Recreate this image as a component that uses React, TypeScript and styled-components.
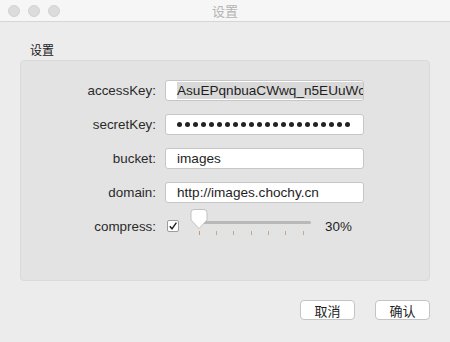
import styled, { createGlobalStyle } from 'styled-components'

const GlobalStyle = createGlobalStyle`
  html, body {
    margin: 0;
    padding: 0;
    background: #ececec;
  }
  body {
    font-family: "Liberation Sans", "Noto Sans CJK SC", sans-serif;
  }
`

const fields = [
  { label: 'accessKey:', value: 'AsuEPqnbuaCWwq_n5EUuWc', selected: true },
  { label: 'secretKey:', value: '', password: 22 },
  { label: 'bucket:', value: 'images' },
  { label: 'domain:', value: 'http://images.chochy.cn' },
]

const ticks = [198, 215, 232, 250, 267, 284, 302]

const Thumb = () => (
  <svg width="18" height="22" viewBox="0 0 18 22">
    <path
      d="M4 1.5 H14 A3 3 0 0 1 17 4.5 V12 L9 20.5 L1 12 V4.5 A3 3 0 0 1 4 1.5 Z"
      fill="#ffffff"
      stroke="#c2c2c2"
      strokeWidth="1"
    />
  </svg>
)

const App = () => {
  return (
    <Window>
      <GlobalStyle />
      <TitleBar>
        <Lights>
          <Light />
          <Light />
          <Light />
        </Lights>
        <WindowTitle>设置</WindowTitle>
      </TitleBar>
      <Body>
        <GroupLabel>设置</GroupLabel>
        <Panel>
          <Form>
            {fields.map((f) => (
              <Row key={f.label}>
                <Label>{f.label}</Label>
                <Field>
                  {f.password ? (
                    <Dots>
                      {Array.from({ length: f.password }).map((_, i) => (
                        <Dot key={i} />
                      ))}
                    </Dots>
                  ) : (
                    <FieldText $selected={!!f.selected}>{f.value}</FieldText>
                  )}
                </Field>
              </Row>
            ))}
            <Row>
              <Label>compress:</Label>
              <Controls>
                <Checkbox>
                  <svg width="10" height="10" viewBox="0 0 10 10">
                    <path d="M1.8 5.2 L4 7.8 L8.4 1.6" fill="none" stroke="#1e1e1e" strokeWidth="1.4" />
                  </svg>
                </Checkbox>
                <Slider>
                  <Track />
                  {ticks.map((x, i) => (
                    <Tick key={x} $first={i === 0} style={{ left: x - 186 }} />
                  ))}
                  <ThumbWrap>
                    <Thumb />
                  </ThumbWrap>
                </Slider>
                <Percent>30%</Percent>
              </Controls>
            </Row>
          </Form>
        </Panel>
        <Buttons>
          <Button>取消</Button>
          <Button>确认</Button>
        </Buttons>
      </Body>
    </Window>
  )
}

const Window = styled.div`
  width: 450px;
  height: 342px;
  background: #ececec;
  display: flex;
  flex-direction: column;
  overflow: hidden;
`
const TitleBar = styled.div`
  height: 21px;
  background: #f6f6f6;
  border-bottom: 1px solid #d6d6d6;
  display: flex;
  align-items: center;
  position: relative;
`
const Lights = styled.div`
  display: flex;
  gap: 8px;
  padding-left: 8px;
`
const Light = styled.span`
  width: 12px;
  height: 12px;
  border-radius: 50%;
  background: #dcdcdc;
  border: 0.5px solid #d2d2d2;
  box-sizing: border-box;
`
const WindowTitle = styled.div`
  position: absolute;
  left: 0;
  right: 0;
  text-align: center;
  font-size: 13px;
  color: #b4b4b4;
`
const Body = styled.div`
  flex: 1;
  display: flex;
  flex-direction: column;
  padding: 0 20px;
`
const GroupLabel = styled.div`
  margin: 21px 0 0 10px;
  height: 16px;
  line-height: 16px;
  font-size: 12px;
  color: #1a1a1a;
`
const Panel = styled.div`
  height: 221px;
  margin-top: 1px;
  background: #e3e3e3;
  border: 1px solid #dadada;
  border-radius: 4px;
  box-sizing: border-box;
  padding-top: 18px;
`
const Form = styled.div`
  display: flex;
  flex-direction: column;
  gap: 12px;
`
const Row = styled.div`
  display: grid;
  grid-template-columns: 135px auto;
  column-gap: 9px;
  align-items: center;
  height: 22px;
`
const Label = styled.div`
  text-align: right;
  font-size: 13.4px;
  color: #2a2a2a;
`
const Field = styled.div`
  width: 199px;
  height: 21px;
  box-sizing: border-box;
  background: #ffffff;
  border: 1px solid #c6c6c6;
  border-radius: 3px;
  display: flex;
  align-items: center;
  padding-left: 11px;
  overflow: hidden;
`
const FieldText = styled.span<{ $selected: boolean }>`
  font-size: 13.6px;
  color: #1e1e1e;
  white-space: nowrap;
  line-height: 17px;
  background: ${(p) => (p.$selected ? '#d9d9d9' : 'transparent')};
  flex: ${(p) => (p.$selected ? 1 : 'none')};
`
const Dots = styled.div`
  display: flex;
  gap: 3px;
`
const Dot = styled.span`
  width: 5px;
  height: 5px;
  border-radius: 50%;
  background: #222222;
`
const Controls = styled.div`
  display: flex;
  align-items: center;
`
const Checkbox = styled.span`
  width: 12px;
  height: 12px;
  margin-left: 2px;
  box-sizing: border-box;
  background: #ffffff;
  border: 1px solid #9c9c9c;
  border-radius: 2px;
  display: flex;
  align-items: center;
  justify-content: center;
`
const Slider = styled.div`
  position: relative;
  width: 124px;
  height: 22px;
  margin-left: 8px;
`
const Track = styled.div`
  position: absolute;
  left: 10px;
  right: 0;
  top: 6px;
  height: 3px;
  border-radius: 2px;
  background: #b8b8b8;
`
const Tick = styled.span<{ $first: boolean }>`
  position: absolute;
  top: 16px;
  width: 1px;
  height: 4px;
  background: ${(p) => (p.$first ? '#c89a6a' : '#c6a888')};
`
const ThumbWrap = styled.div`
  position: absolute;
  left: 3px;
  top: -7px;
  display: flex;
`
const Percent = styled.div`
  margin-left: 14px;
  font-size: 13.4px;
  color: #1e1e1e;
`
const Buttons = styled.div`
  display: flex;
  justify-content: flex-end;
  gap: 20px;
  margin-top: 19px;
  margin-right: 0;
`
const Button = styled.div`
  width: 55px;
  height: 20px;
  box-sizing: border-box;
  background: #ffffff;
  border: 1px solid #c4c4c4;
  border-radius: 4px;
  font-size: 13px;
  color: #1e1e1e;
  display: flex;
  align-items: center;
  justify-content: center;
`

export default App
